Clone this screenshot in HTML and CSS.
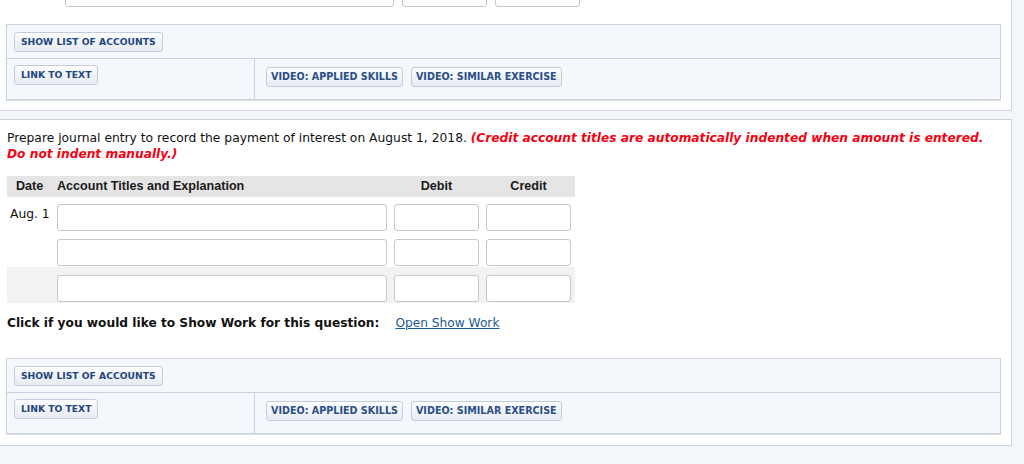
FILE: index.html
```html
<!DOCTYPE html>
<html lang="en">
<head>
<meta charset="utf-8">
<title>Journal entry</title>
<link rel="stylesheet" href="styles.css">
</head>
<body>
<div class="page">
  <section class="card card-top">
    <div class="entry-row">
      <input class="field" type="text" aria-label="Account title">
      <input class="field" type="text" aria-label="Debit">
      <input class="field" type="text" aria-label="Credit">
    </div>
    <div class="tools">
      <div class="tools-row"><button class="btn" type="button">SHOW LIST OF ACCOUNTS</button></div>
      <div class="tools-row tools-split">
        <div class="tools-left"><button class="btn" type="button">LINK TO TEXT</button></div>
        <div class="tools-right">
          <button class="btn btn-video" type="button">VIDEO: APPLIED SKILLS</button>
          <button class="btn btn-video" type="button">VIDEO: SIMILAR EXERCISE</button>
        </div>
      </div>
    </div>
  </section>

  <section class="card card-main">
    <p class="prompt">Prepare journal entry to record the payment of interest on August 1, 2018. <em class="note">(Credit account titles are automatically indented when amount is entered.</em> <em class="note">Do not indent manually.)</em></p>

    <div class="journal">
      <div class="jrow jhead">
        <div class="h-date">Date</div>
        <div class="h-acct">Account Titles and Explanation</div>
        <div class="h-num">Debit</div>
        <div class="h-num">Credit</div>
      </div>
      <div class="jrow">
        <div class="c-date">Aug. 1</div>
        <input class="field" type="text" aria-label="Account title 1">
        <input class="field" type="text" aria-label="Debit 1">
        <input class="field" type="text" aria-label="Credit 1">
      </div>
      <div class="jrow">
        <div class="c-date"></div>
        <input class="field" type="text" aria-label="Account title 2">
        <input class="field" type="text" aria-label="Debit 2">
        <input class="field" type="text" aria-label="Credit 2">
      </div>
      <div class="jrow jrow-alt">
        <div class="c-date"></div>
        <input class="field" type="text" aria-label="Account title 3">
        <input class="field" type="text" aria-label="Debit 3">
        <input class="field" type="text" aria-label="Credit 3">
      </div>
    </div>

    <p class="showwork"><strong>Click if you would like to Show Work for this question:</strong><a href="#" class="showwork-link">Open Show Work</a></p>

    <div class="tools tools-main">
      <div class="tools-row"><button class="btn" type="button">SHOW LIST OF ACCOUNTS</button></div>
      <div class="tools-row tools-split">
        <div class="tools-left"><button class="btn" type="button">LINK TO TEXT</button></div>
        <div class="tools-right">
          <button class="btn btn-video" type="button">VIDEO: APPLIED SKILLS</button>
          <button class="btn btn-video" type="button">VIDEO: SIMILAR EXERCISE</button>
        </div>
      </div>
    </div>
  </section>
</div>
</body>
</html>
```

FILE: styles.css
```css
html, body {
  margin: 0;
  padding: 0;
}

body {
  background: #f4f7fa;
  font-family: "DejaVu Sans", Verdana, sans-serif;
  font-size: 12.3px;
  color: #111;
  overflow: hidden;
}

.page {
  width: 1024px;
}

.card {
  box-sizing: border-box;
  width: 1013px;
  margin-left: -1px;
  background: #fff;
  border: 1px solid #c9d2dd;
}

.card-top {
  margin-top: -21px;
  padding-bottom: 10px;
}

.card-main {
  margin-top: 8px;
  padding: 10px 0 11px 0;
}

/* inputs */
.field {
  box-sizing: border-box;
  height: 27px;
  margin: 0;
  padding: 0 4px;
  border: 1px solid #c8c8c8;
  border-radius: 3px;
  background: #fff;
  font: inherit;
  outline: none;
}

.entry-row {
  display: grid;
  grid-template-columns: 329px 85px 85px;
  column-gap: 8px;
  margin-left: 65px;
}

/* tool panels */
.tools {
  box-sizing: border-box;
  width: 995px;
  margin: 17px 0 0 6px;
  border: 1px solid #c8d1dd;
  background: #f4f7fb;
  box-shadow: 0 1px 0 #dde2e8;
}

.tools-main {
  margin-top: 27px;
}

.tools-row {
  box-sizing: border-box;
  height: 34px;
  padding: 7px 7px 0;
  border-bottom: 1px solid #c8d1dd;
}

.tools-split {
  display: flex;
  height: 40px;
  padding: 0;
  border-bottom: 0;
}

.tools-left {
  box-sizing: border-box;
  width: 248px;
  padding: 6px 7px 0;
  border-right: 1px solid #c8d1dd;
}

.tools-right {
  display: flex;
  align-items: flex-start;
  gap: 8px;
  padding: 8px 0 0 11px;
}

.btn {
  box-sizing: border-box;
  height: 20px;
  margin: 0;
  padding: 0 6px;
  border: 1px solid #c3ccd8;
  border-radius: 3px;
  background: linear-gradient(#fcfdfe, #e7ecf2);
  color: #1f447f;
  font-family: "DejaVu Sans", Verdana, sans-serif;
  font-weight: bold;
  font-size: 9.2px;
  line-height: 18px;
  white-space: nowrap;
  cursor: pointer;
}

.btn-video {
  padding: 0 4px;
  font-size: 9.6px;
  color: #2b4f86;
}

/* prompt */
.prompt {
  margin: 0 20px 0 7px;
  line-height: 16px;
}

.note {
  color: #f5000f;
  font-weight: bold;
  font-style: italic;
  font-size: 12.2px;
}

/* journal table */
.journal {
  width: 568px;
  margin: 14px 0 0 7px;
}

.jrow {
  box-sizing: border-box;
  display: grid;
  grid-template-columns: 43px 330px 85px 85px;
  column-gap: 7px;
  height: 35px;
  padding: 7px 4px 0 0;
}

.jrow-alt {
  height: 36px;
  padding-top: 8px;
  background: #f2f2f2;
}

.jhead {
  height: 21px;
  padding: 0 4px 0 0;
  background: #e5e5e5;
  font-family: "Liberation Sans", Arial, sans-serif;
  font-weight: bold;
  font-size: 12.6px;
  line-height: 21px;
  color: #1a1a1a;
}

.h-date {
  padding-left: 9px;
}

.h-num {
  text-align: center;
}

.c-date {
  padding: 2px 0 0 3px;
  line-height: 16px;
  white-space: nowrap;
}

/* show work line */
.showwork {
  margin: 12px 0 0 7px;
  font-size: 12.2px;
  line-height: 16px;
}

.showwork strong {
  color: #111;
}

.showwork-link {
  margin-left: 16px;
  color: #1d5a97;
  text-decoration: underline;
}
```
